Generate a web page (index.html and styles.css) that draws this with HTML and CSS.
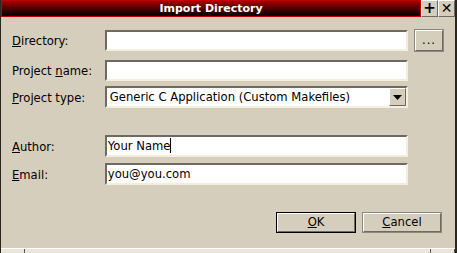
FILE: index.html
```html
<!DOCTYPE html>
<html lang="en">
<head>
    <meta charset="UTF-8">
    <title>Import Directory</title>
    <link rel="stylesheet" href="styles.css">
</head>
<body>
<div class="window">
    <div class="titlebar">
        <div class="title">Import Directory</div>
        <span class="tbtn">+</span>
        <span class="tbtn close">&#x2715;</span>
    </div>
    <div class="content">
        <div class="row r1">
            <label><u>D</u>irectory:</label>
            <div class="field"></div>
            <span class="browse">...</span>
        </div>
        <div class="row r2">
            <label>Project <u>n</u>ame:</label>
            <div class="field"></div>
            <span class="spacer"></span>
        </div>
        <div class="row r3">
            <label><u>P</u>roject type:</label>
            <div class="combo">
                <span class="combo-text">Generic C Application (Custom Makefiles)</span>
                <span class="arrow"><svg width="9" height="5" viewBox="0 0 9 5"><path d="M0 0h9L4.5 5z" fill="#000"/></svg></span>
            </div>
            <span class="spacer"></span>
        </div>
        <div class="row r4">
            <label><u>A</u>uthor:</label>
            <div class="field">Your Name<span class="caret"></span></div>
            <span class="spacer"></span>
        </div>
        <div class="row r5">
            <label><u>E</u>mail:</label>
            <div class="field">you@you.com</div>
            <span class="spacer"></span>
        </div>
        <div class="buttons">
            <span class="btn default"><span><u>O</u>K</span></span>
            <span class="btn"><span><u>C</u>ancel</span></span>
        </div>
    </div>
    <div class="statusbar">
        <span class="grip"></span>
        <span class="grip-mid"></span>
        <span class="grip"></span>
    </div>
</div>
</body>
</html>
```
FILE: styles.css
```css
* {
    margin: 0;
    padding: 0;
    box-sizing: border-box;
}

body {
    width: 457px;
    height: 253px;
    overflow: hidden;
    font-family: "DejaVu Sans", sans-serif;
    font-size: 11.6px;
    color: #000;
}

.window {
    width: 457px;
    height: 253px;
    display: flex;
    flex-direction: column;
    background-color: #d6cebd;
    border-left: 1px solid #2a2620;
    border-right: 2px solid #2a2620;
}

.titlebar {
    height: 17px;
    display: flex;
}

.title {
    flex: 1;
    background: linear-gradient(#a40000, #000);
    border: 1px solid #c00000;
    color: #fff;
    font-weight: bold;
    font-size: 11px;
    line-height: 15px;
    text-align: center;
}

.tbtn {
    width: 17px;
    height: 17px;
    background-color: #d6cebd;
    border-top: 1px solid #fff;
    border-left: 1px solid #fff;
    border-right: 1px solid #6e6a61;
    border-bottom: 1px solid #6e6a61;
    font-weight: bold;
    font-size: 15px;
    line-height: 14px;
    text-align: center;
}

.close {
    font-size: 14px;
}

.content {
    flex: 1;
    padding: 13px 12px 0 11px;
}

.row {
    display: flex;
    align-items: center;
    height: 21px;
}

.row label {
    width: 93px;
    padding-top: 1px;
}

.r2 {
    margin-top: 9px;
}

.r3 {
    margin-top: 5px;
    height: 22px;
}

.r4 {
    margin-top: 27px;
    height: 22px;
}

.r5 {
    margin-top: 6px;
    height: 22px;
}

.field {
    width: 304px;
    height: 100%;
    background-color: #fff;
    border-top: 2px solid #6e6a61;
    border-left: 2px solid #6e6a61;
    border-right: 2px solid #f6eedd;
    border-bottom: 2px solid #f6eedd;
    padding-left: 1px;
    line-height: 18px;
}

.caret {
    display: inline-block;
    width: 1px;
    height: 15px;
    background-color: #000;
    vertical-align: -3px;
}

.spacer,
.browse {
    width: 28px;
    margin-left: 7px;
}

.browse {
    height: 21px;
    border-top: 1px solid #fff;
    border-left: 1px solid #fff;
    border-right: 1px solid #6e6a61;
    border-bottom: 1px solid #6e6a61;
    outline: 1px solid #8c877c;
    text-align: center;
    line-height: 18px;
    letter-spacing: 1px;
}

.combo {
    width: 304px;
    height: 100%;
    display: flex;
    border-top: 2px solid #6e6a61;
    border-left: 2px solid #6e6a61;
    border-right: 2px solid #f6eedd;
    border-bottom: 2px solid #f6eedd;
}

.combo-text {
    flex: 1;
    background-color: #fff;
    padding-left: 3px;
    line-height: 19px;
}

.arrow {
    width: 17px;
    display: flex;
    align-items: center;
    justify-content: center;
    background-color: #d6cebd;
    border-top: 1px solid #fff;
    border-left: 1px solid #fff;
    border-right: 1px solid #6e6a61;
    border-bottom: 1px solid #6e6a61;
}

.buttons {
    display: flex;
    justify-content: flex-end;
    gap: 6px;
    margin-top: 27px;
    padding-right: 1px;
}

.btn {
    width: 80px;
    height: 21px;
    display: flex;
    border: 1px solid #8c877c;
}

.btn span {
    flex: 1;
    border-top: 1px solid #fff;
    border-left: 1px solid #fff;
    border-right: 1px solid #6e6a61;
    border-bottom: 1px solid #6e6a61;
    text-align: center;
    line-height: 17px;
}

.btn.default {
    border-color: #000;
}

.statusbar {
    height: 5px;
    display: flex;
    background-color: #ece6da;
    border-top: 1px solid #fff;
}

.grip {
    width: 24px;
    border-right: 1px solid #555;
}

.grip-mid {
    flex: 1;
    border-right: 1px solid #555;
}
```
